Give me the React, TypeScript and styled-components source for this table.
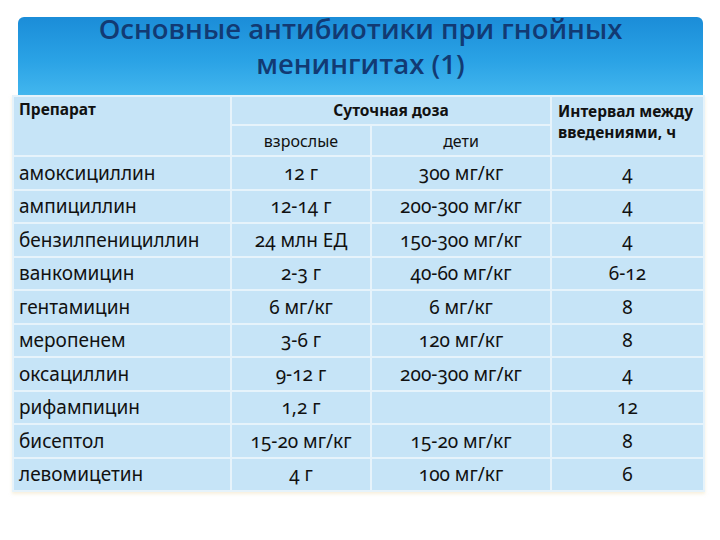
import styled, { createGlobalStyle } from 'styled-components'

const GlobalStyle = createGlobalStyle`
  * {
    margin: 0;
    padding: 0;
    box-sizing: border-box;
  }
  body {
    background: #fff;
    font-family: "Noto Sans", "Open Sans", sans-serif;
  }
`

const Page = styled.div`
  width: 720px;
  height: 540px;
  padding-top: 17px;
  background: #fff;
`

const Banner = styled.div`
  margin-left: 18px;
  width: 685px;
  height: 78px;
  border-radius: 6px 6px 0 0;
  background: linear-gradient(180deg, #1b8dd8 0%, #2aa2e5 55%, #42b6ee 100%);
  display: flex;
  flex-direction: column;
  align-items: center;
  justify-content: flex-start;
`

const TitleLine = styled.h1`
  font-family: "Open Sans", "Noto Sans", sans-serif;
  font-weight: 600;
  font-size: 27.5px;
  line-height: 35px;
  color: #123a73;
  margin-top: -6px;
  & + & {
    margin-top: 0;
  }
`

const Table = styled.table`
  margin-left: 12px;
  width: 691px;
  border-collapse: collapse;
  table-layout: fixed;
  box-shadow: 0 2px 3px rgba(240, 225, 190, 0.5);
`

const Cell = styled.td<{ $align?: 'left' | 'center'; $h?: number; $valign?: 'top' | 'middle' }>`
  background: #c6e4f7;
  border: 2px solid #e6f3fb;
  height: ${({ $h }) => $h ?? 33.5}px;
  text-align: ${({ $align }) => $align ?? 'center'};
  vertical-align: ${({ $valign }) => $valign ?? 'middle'};
  padding: 0 5px;
  font-size: 19px;
  line-height: 24px;
  color: #111;
  font-variant-numeric: oldstyle-nums;
  white-space: nowrap;
`

const HeadCell = styled(Cell)`
  font-size: 15.5px;
  font-weight: 700;
  line-height: 21px;
`

const SubHeadCell = styled(Cell)`
  font-size: 16px;
  font-weight: 400;
`

type Row = [string, string, string, string]

const rows: Row[] = [
  ['амоксициллин', '12 г', '300 мг/кг', '4'],
  ['ампициллин', '12-14 г', '200-300 мг/кг', '4'],
  ['бензилпенициллин', '24 млн ЕД', '150-300 мг/кг', '4'],
  ['ванкомицин', '2-3 г', '40-60 мг/кг', '6-12'],
  ['гентамицин', '6 мг/кг', '6 мг/кг', '8'],
  ['меропенем', '3-6 г', '120 мг/кг', '8'],
  ['оксациллин', '9-12 г', '200-300 мг/кг', '4'],
  ['рифампицин', '1,2 г', '', '12'],
  ['бисептол', '15-20 мг/кг', '15-20 мг/кг', '8'],
  ['левомицетин', '4 г', '100 мг/кг', '6'],
]

export default function App() {
  return (
    <>
      <GlobalStyle />
      <Page>
        <Banner>
          <TitleLine>Основные антибиотики при гнойных</TitleLine>
          <TitleLine>менингитах (1)</TitleLine>
        </Banner>
        <Table>
          <colgroup>
            <col style={{ width: 218 }} />
            <col style={{ width: 140 }} />
            <col style={{ width: 180 }} />
            <col style={{ width: 153 }} />
          </colgroup>
          <tbody>
            <tr>
              <HeadCell as="th" rowSpan={2} $align="left" $valign="top" $h={29} style={{ paddingTop: 2 }}>
                Препарат
              </HeadCell>
              <HeadCell as="th" colSpan={2} $h={29}>
                Суточная доза
              </HeadCell>
              <HeadCell as="th" rowSpan={2} $align="left" $valign="top" style={{ paddingTop: 4, paddingLeft: 6 }}>
                Интервал между
                <br />
                введениями, ч
              </HeadCell>
            </tr>
            <tr>
              <SubHeadCell $h={31}>взрослые</SubHeadCell>
              <SubHeadCell $h={31}>дети</SubHeadCell>
            </tr>
            {rows.map((r) => (
              <tr key={r[0]}>
                <Cell $align="left">{r[0]}</Cell>
                <Cell>{r[1]}</Cell>
                <Cell>{r[2]}</Cell>
                <Cell>{r[3]}</Cell>
              </tr>
            ))}
          </tbody>
        </Table>
      </Page>
    </>
  )
}
